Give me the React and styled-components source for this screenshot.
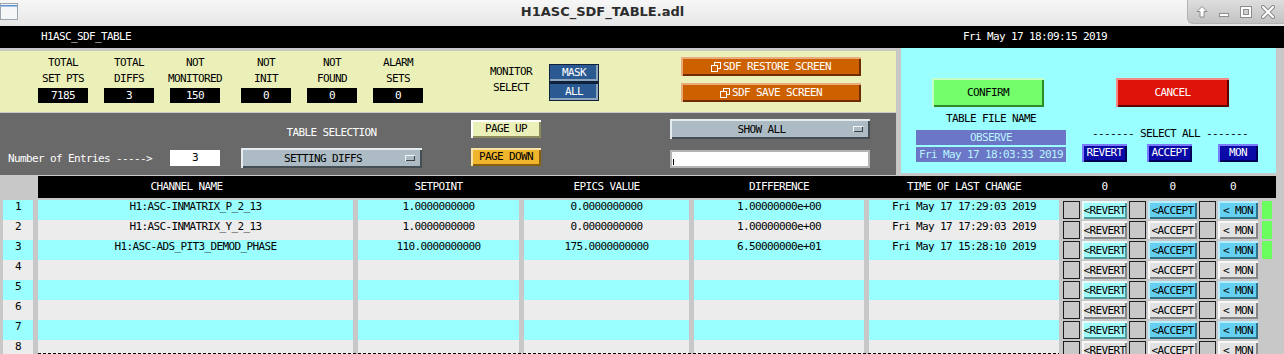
import React from "react";
import styled, { createGlobalStyle, css } from "styled-components";

const MONO = `"DejaVu Sans Mono", "Liberation Mono", monospace`;

const GlobalStyle = createGlobalStyle`
  html, body {
    margin: 0;
    padding: 0;
    background: #c8c8c8;
  }
  body {
    width: 1284px;
    height: 354px;
    overflow: hidden;
  }
`;

const bevel = (light, dark, w = 2) => css`
  box-shadow: inset ${w}px ${w}px 0 ${light}, inset -${w}px -${w}px 0 ${dark};
`;

const Screen = styled.div`
  width: 1284px;
  height: 354px;
  overflow: hidden;
  background: #c8c8c8;
  font-family: ${MONO};
  font-size: 11px;
  letter-spacing: -0.62px;
  color: #000;
`;

/* ---------- window title bar ---------- */

const TitleBar = styled.div`
  height: 26px;
  display: flex;
  align-items: flex-start;
  background: linear-gradient(#f7f7f7, #e6e6e6);
`;

const AppIcon = styled.svg`
  margin-top: 3px;
  flex: none;
`;

const Title = styled.div`
  flex: 1;
  text-align: center;
  line-height: 24px;
  font-family: "DejaVu Sans", sans-serif;
  font-weight: bold;
  font-size: 13px;
  letter-spacing: 0;
  color: #2c2c2c;
`;

const Controls = styled.div`
  width: 97px;
  height: 24px;
  box-sizing: border-box;
  padding-left: 3px;
  display: flex;
  align-items: center;
  background: linear-gradient(#dedede, #c2c2c2);
  border-left: 1px solid #b4b4b4;
  border-bottom: 1px solid #b4b4b4;
  border-bottom-left-radius: 6px;
`;

const CtrlIcon = styled.svg`
  width: 22px;
  height: 14px;
`;

/* ---------- black status bar ---------- */

const StatusBar = styled.div`
  height: 22px;
  background: #000;
  color: #fff;
  display: grid;
  grid-template-columns: 922px 1fr;
  padding-left: 41px;
  align-items: center;
  line-height: 14px;
`;

/* ---------- top panels ---------- */

const Top = styled.div`
  display: flex;
  height: 128px;
`;

const LeftStack = styled.div`
  width: 896px;
  padding-top: 3px;
  display: flex;
  flex-direction: column;
  gap: 1px;
`;

const YellowPanel = styled.div`
  height: 61px;
  background: #ebf0b9;
  display: flex;
  align-items: flex-start;
`;

const GrayPanel = styled.div`
  height: 62px;
  background: #696969;
  display: flex;
  align-items: flex-start;
  color: #fff;
`;

const CyanPanel = styled.div`
  margin-left: 5px;
  width: 375px;
  height: 125px;
  box-sizing: border-box;
  background: #99ffff;
  padding: 30px 0 0 15px;
  display: flex;
`;

const Stat = styled.div`
  width: 50px;
  margin-left: ${(p) => p.$ml}px;
  padding-top: 4px;
  display: flex;
  flex-direction: column;
  align-items: center;
  line-height: 16px;
  white-space: nowrap;
`;

const ValueBox = styled.div`
  align-self: stretch;
  height: 15px;
  margin-top: 1px;
  background: #000;
  color: #fff;
  text-align: center;
  line-height: 15px;
`;

const MonitorLabel = styled.div`
  width: 60px;
  margin-left: 58px;
  padding-top: 13px;
  display: flex;
  flex-direction: column;
  align-items: center;
  line-height: 16px;
`;

const MonitorFrame = styled.div`
  width: 50px;
  height: 37px;
  box-sizing: border-box;
  margin: 13px 0 0 8px;
  padding: 1px;
  background: #0f2239;
  display: flex;
  flex-direction: column;
  gap: 3px;
`;

const MonitorBtn = styled.div`
  height: 16px;
  background: #2b5a92;
  color: #fff;
  text-align: center;
  line-height: 16px;
  box-shadow: inset -2px -2px 0 #8ea5be;
`;

const RestoreCol = styled.div`
  margin: 6px 0 0 82px;
  display: flex;
  flex-direction: column;
  gap: 7px;
`;

const OrangeBtn = styled.div`
  width: 180px;
  height: 19px;
  background: #cd6100;
  color: #fff;
  display: flex;
  align-items: center;
  justify-content: center;
  ${bevel("#eaaa7c", "#6e2c00")}
`;

const Entries = styled.div`
  align-self: flex-end;
  margin: 0 0 9px 8px;
  display: flex;
  align-items: center;
  height: 16px;
`;

const EntriesLabel = styled.div`
  width: 162px;
  white-space: nowrap;
`;

const EntryBox = styled.div`
  width: 50px;
  height: 16px;
  background: #fff;
  color: #000;
  text-align: center;
  line-height: 16px;
`;

const Column = styled.div`
  margin-left: ${(p) => p.$ml}px;
  padding-top: ${(p) => p.$pt}px;
  display: flex;
  flex-direction: column;
  align-items: center;
  gap: ${(p) => p.$gap || 0}px;
`;

const PanelLabel = styled.div`
  line-height: 14px;
  margin-bottom: ${(p) => p.$mb || 0}px;
  white-space: nowrap;
`;

const Menu = styled.div`
  width: ${(p) => p.$w}px;
  height: 20px;
  box-sizing: border-box;
  background: #adbcc4;
  color: #000;
  display: flex;
  align-items: center;
  padding-right: 7px;
  ${bevel("#e4ecef", "#454e53")}
`;

const MenuText = styled.div`
  flex: 1;
  text-align: center;
`;

const MenuMark = styled.div`
  width: 10px;
  height: 6px;
  background: #adbcc4;
  ${bevel("#f2f6f8", "#3a4246", 1)}
`;

const PageBtn = styled.div`
  width: 70px;
  height: 18px;
  background: ${(p) => p.$bg};
  color: #000;
  text-align: center;
  line-height: 18px;
  ${(p) => bevel(p.$light, p.$dark)}
`;

const TextInput = styled.div`
  width: 200px;
  height: 18px;
  box-sizing: border-box;
  background: #fff;
  border: 2px solid #b4b4b4;
  display: flex;
  align-items: center;
  padding-left: 1px;
`;

const Caret = styled.span`
  width: 1px;
  height: 6px;
  margin-top: 6px;
  background: #000;
`;

/* ---------- cyan panel ---------- */

const CyanCol = styled.div`
  width: ${(p) => p.$w}px;
  margin-left: ${(p) => p.$ml || 0}px;
  display: flex;
  flex-direction: column;
`;

const BigBtn = styled.div`
  width: ${(p) => p.$w}px;
  height: 29px;
  margin-left: ${(p) => p.$ml}px;
  background: ${(p) => p.$bg};
  color: ${(p) => p.$fg};
  text-align: center;
  line-height: 29px;
  ${(p) => bevel(p.$light, p.$dark)}
`;

const CenterLabel = styled.div`
  line-height: 14px;
  text-align: center;
  margin-top: ${(p) => p.$mt}px;
  white-space: nowrap;
`;

const FileBox = styled.div`
  height: 15px;
  margin-top: ${(p) => p.$mt}px;
  background: #6b76c6;
  color: #b9f4ff;
  text-align: center;
  line-height: 15px;
  white-space: nowrap;
`;

const SelRow = styled.div`
  display: flex;
  margin-top: 3px;
`;

const NavyBtn = styled.div`
  width: ${(p) => p.$w}px;
  margin-left: ${(p) => p.$ml}px;
  height: 18px;
  background: #0a0aa6;
  color: #fff;
  text-align: center;
  line-height: 18px;
  ${bevel("#7b7bff", "#00005a")}
`;

/* ---------- table ---------- */

const cols = css`
  display: grid;
  grid-template-columns: 315px 161px 165px 170px 190px auto;
  column-gap: 5px;
`;

const HeaderBar = styled.div`
  ${cols}
  margin-left: 38px;
  width: 1238px;
  height: 22px;
  background: #000;
  color: #fff;
  align-items: center;
  line-height: 14px;
`;

const HeadCell = styled.div`
  text-align: center;
  white-space: nowrap;
  padding-right: ${(p) => p.$pr || 0}px;
`;

const Rows = styled.div`
  margin-top: 2px;
  height: 154px;
  overflow: hidden;
  position: relative;
`;

const Row = styled.div`
  ${cols}
  grid-template-columns: 30px 315px 161px 165px 170px 190px auto;
  padding-left: 3px;
  height: 20px;
`;

const Cell = styled.div`
  background: ${(p) => (p.$alt ? "#ececec" : "#99ffff")};
  text-align: center;
  line-height: 14px;
  white-space: nowrap;
`;

const Actions = styled.div`
  margin-left: -1px;
  display: grid;
  grid-template-columns: 17px 45px 17px 49px 17px 40px 12px;
  column-gap: 2px;
  align-items: center;
  & > :last-child {
    margin-left: 2px;
  }
`;

const HeadActions = styled(Actions)`
  height: 22px;
`;

const CheckBox = styled.div`
  height: 18px;
  margin-top: 1px;
  box-sizing: border-box;
  background: #c8c8c8;
  border: 1px solid #1e1e1e;
  align-self: start;
`;

const RowBtn = styled.div`
  height: 18px;
  margin-top: 1px;
  align-self: start;
  background: ${(p) => p.$bg};
  display: flex;
  justify-content: center;
  align-items: center;
  white-space: nowrap;
  ${(p) => bevel(p.$light, p.$dark)}
`;

const Led = styled.div`
  height: 18px;
  margin-top: 1px;
  align-self: start;
  background: ${(p) => (p.$on ? "#6aff5e" : "transparent")};
`;

const DashedEdge = styled.div`
  position: absolute;
  left: 38px;
  top: 153px;
  width: 1021px;
  height: 1px;
  background: repeating-linear-gradient(90deg, #000 0 3px, transparent 3px 5px);
`;

const cyanBtn = {
  revert: { $bg: "#a2fbfb", $light: "#e6ffff", $dark: "#4f9a9a" },
  accept: { $bg: "#66d0f2", $light: "#b8ecff", $dark: "#2f7288" },
};
const grayBtn = { $bg: "#e2e2e2", $light: "#f8f8f8", $dark: "#868686" };

const stats = [
  { a: "TOTAL", b: "SET PTS", v: "7185", ml: 38 },
  { a: "TOTAL", b: "DIFFS", v: "3", ml: 16 },
  { a: "NOT", b: "MONITORED", v: "150", ml: 16 },
  { a: "NOT", b: "INIT", v: "0", ml: 21 },
  { a: "NOT", b: "FOUND", v: "0", ml: 16 },
  { a: "ALARM", b: "SETS", v: "0", ml: 16 },
];

const data = [
  {
    ch: "H1:ASC-INMATRIX_P_2_13",
    sp: "1.0000000000",
    ev: "0.0000000000",
    diff: "1.00000000e+00",
    time: "Fri May 17 17:29:03 2019",
  },
  {
    ch: "H1:ASC-INMATRIX_Y_2_13",
    sp: "1.0000000000",
    ev: "0.0000000000",
    diff: "1.00000000e+00",
    time: "Fri May 17 17:29:03 2019",
  },
  {
    ch: "H1:ASC-ADS_PIT3_DEMOD_PHASE",
    sp: "110.0000000000",
    ev: "175.0000000000",
    diff: "6.50000000e+01",
    time: "Fri May 17 15:28:10 2019",
  },
];

const rows = Array.from({ length: 8 }, (_, i) => data[i] || null);

function CopyIcon() {
  return (
    <svg width="11" height="10" viewBox="0 0 11 10" style={{ marginRight: 1 }}>
      <rect x="3.5" y="0.5" width="6" height="6" fill="none" stroke="#fff" />
      <rect x="0.5" y="3.5" width="6" height="6" fill="#cd6100" stroke="#fff" />
    </svg>
  );
}

function WindowControls() {
  return (
    <Controls>
      <CtrlIcon viewBox="0 0 22 14">
        <path d="M11 1.5 L16 6.5 L13 6.5 L13 12 L9 12 L9 6.5 L6 6.5 Z" fill="#fff" stroke="#8c8c8c" />
      </CtrlIcon>
      <CtrlIcon viewBox="0 0 22 14">
        <rect x="6.5" y="8.5" width="9" height="3" fill="#fff" stroke="#8c8c8c" />
      </CtrlIcon>
      <CtrlIcon viewBox="0 0 22 14">
        <rect x="5.5" y="1.5" width="11" height="11" fill="none" stroke="#8c8c8c" />
        <rect x="7" y="3" width="8" height="8" fill="none" stroke="#fff" strokeWidth="2" />
        <rect x="8.5" y="4.5" width="5" height="5" fill="none" stroke="#8c8c8c" />
      </CtrlIcon>
      <CtrlIcon viewBox="0 0 22 14">
        <path d="M6 2 L16 12 M16 2 L6 12" stroke="#8c8c8c" strokeWidth="4" strokeLinecap="round" />
        <path d="M6 2 L16 12 M16 2 L6 12" stroke="#fff" strokeWidth="2" strokeLinecap="round" />
      </CtrlIcon>
    </Controls>
  );
}

export default function App() {
  return (
    <Screen>
      <GlobalStyle />
      <TitleBar>
        <AppIcon width="18" height="18" viewBox="0 0 18 18">
          <rect x="0.5" y="0.5" width="17" height="16" fill="#f4f6f8" stroke="#9aa4ae" />
          <rect x="1" y="2" width="16" height="1.5" fill="#5a8fd0" />
        </AppIcon>
        <Title>H1ASC_SDF_TABLE.adl</Title>
        <WindowControls />
      </TitleBar>

      <StatusBar>
        <span>H1ASC_SDF_TABLE</span>
        <span>Fri May 17 18:09:15 2019</span>
      </StatusBar>

      <Top>
        <LeftStack>
          <YellowPanel>
            {stats.map((s) => (
              <Stat key={s.a + s.b} $ml={s.ml}>
                <span>{s.a}</span>
                <span>{s.b}</span>
                <ValueBox>{s.v}</ValueBox>
              </Stat>
            ))}
            <MonitorLabel>
              <span>MONITOR</span>
              <span>SELECT</span>
            </MonitorLabel>
            <MonitorFrame>
              <MonitorBtn>MASK</MonitorBtn>
              <MonitorBtn>ALL</MonitorBtn>
            </MonitorFrame>
            <RestoreCol>
              <OrangeBtn>
                <CopyIcon />
                SDF RESTORE SCREEN
              </OrangeBtn>
              <OrangeBtn>
                <CopyIcon />
                SDF SAVE SCREEN
              </OrangeBtn>
            </RestoreCol>
          </YellowPanel>

          <GrayPanel>
            <Entries>
              <EntriesLabel>Number of Entries -----&gt;</EntriesLabel>
              <EntryBox>3</EntryBox>
            </Entries>
            <Column $ml={21} $pt={13}>
              <PanelLabel $mb={8}>TABLE SELECTION</PanelLabel>
              <Menu $w={181}>
                <MenuText>SETTING DIFFS</MenuText>
                <MenuMark />
              </Menu>
            </Column>
            <Column $ml={49} $pt={7} $gap={10}>
              <PageBtn $bg="#ebf0b9" $light="#ffffff" $dark="#8c8c60">
                PAGE UP
              </PageBtn>
              <PageBtn $bg="#efb52d" $light="#fbe3a6" $dark="#8a5f0c">
                PAGE DOWN
              </PageBtn>
            </Column>
            <Column $ml={129} $pt={6} $gap={11}>
              <Menu $w={200}>
                <MenuText>SHOW ALL</MenuText>
                <MenuMark />
              </Menu>
              <TextInput>
                <Caret />
              </TextInput>
            </Column>
          </GrayPanel>
        </LeftStack>

        <CyanPanel>
          <CyanCol $w={150}>
            <BigBtn $w={112} $ml={16} $bg="#73ff6b" $fg="#000" $light="#c6ffc2" $dark="#2f8a2a">
              CONFIRM
            </BigBtn>
            <CenterLabel $mt={5}>TABLE FILE NAME</CenterLabel>
            <FileBox $mt={4}>OBSERVE</FileBox>
            <FileBox $mt={2}>Fri May 17 18:03:33 2019</FileBox>
          </CyanCol>
          <CyanCol $w={176} $ml={16}>
            <BigBtn $w={113} $ml={34} $bg="#de1309" $fg="#fff" $light="#f38a84" $dark="#5e0000">
              CANCEL
            </BigBtn>
            <CenterLabel $mt={20}>------- SELECT ALL -------</CenterLabel>
            <SelRow>
              <NavyBtn $w={45} $ml={0}>REVERT</NavyBtn>
              <NavyBtn $w={45} $ml={20}>ACCEPT</NavyBtn>
              <NavyBtn $w={40} $ml={26}>MON</NavyBtn>
            </SelRow>
          </CyanCol>
        </CyanPanel>
      </Top>

      <HeaderBar>
        <HeadCell $pr={18}>CHANNEL NAME</HeadCell>
        <HeadCell>SETPOINT</HeadCell>
        <HeadCell>EPICS VALUE</HeadCell>
        <HeadCell>DIFFERENCE</HeadCell>
        <HeadCell>TIME OF LAST CHANGE</HeadCell>
        <HeadActions>
          <span />
          <HeadCell>0</HeadCell>
          <span />
          <HeadCell>0</HeadCell>
          <span />
          <HeadCell $pr={10}>0</HeadCell>
          <span />
        </HeadActions>
      </HeaderBar>

      <Rows>
        {rows.map((r, i) => {
          const alt = i % 2 === 1;
          const rev = alt ? grayBtn : cyanBtn.revert;
          const acc = alt ? grayBtn : cyanBtn.accept;
          return (
            <Row key={i}>
              <Cell $alt={alt}>{i + 1}</Cell>
              <Cell $alt={alt}>{r ? r.ch : ""}</Cell>
              <Cell $alt={alt}>{r ? r.sp : ""}</Cell>
              <Cell $alt={alt}>{r ? r.ev : ""}</Cell>
              <Cell $alt={alt}>{r ? r.diff : ""}</Cell>
              <Cell $alt={alt}>{r ? r.time : ""}</Cell>
              <Actions>
                <CheckBox />
                <RowBtn {...rev}>&lt;REVERT</RowBtn>
                <CheckBox />
                <RowBtn {...acc}>&lt;ACCEPT</RowBtn>
                <CheckBox />
                <RowBtn {...acc}>&lt; MON</RowBtn>
                <Led $on={!!r} />
              </Actions>
            </Row>
          );
        })}
        <DashedEdge />
      </Rows>
    </Screen>
  );
}
